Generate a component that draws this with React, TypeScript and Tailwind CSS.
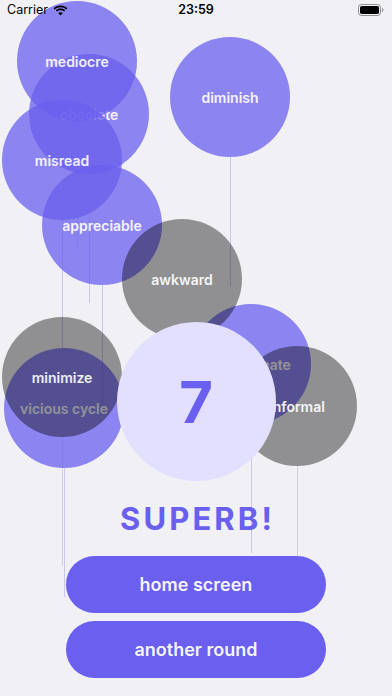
import React from "react"

type Balloon = {
  word: string
  x: number
  y: number
  gray?: boolean
}

// order matters: later ones sit on top
const balloons: Balloon[] = [
  { word: "obsolete", x: 89, y: 114 },
  { word: "mediocre", x: 77, y: 61 },
  { word: "misread", x: 62, y: 160 },
  { word: "appreciable", x: 102, y: 225 },
  { word: "diminish", x: 230, y: 97 },
  { word: "vicious cycle", x: 64, y: 408 },
  { word: "unfortunate", x: 251, y: 364 },
  { word: "awkward", x: 182, y: 279, gray: true },
  { word: "minimize", x: 62, y: 377, gray: true },
  { word: "informal", x: 297, y: 406, gray: true },
]

const R = 60
const STRING = 129

function Wifi() {
  return (
    <svg width="15" height="11" viewBox="0 0 15 11">
      <path d="M7.5 2.2c2.2 0 4.2.8 5.7 2.2l1.1-1.2C12.5 1.5 10.1.5 7.5.5S2.5 1.5.7 3.2l1.1 1.2c1.5-1.4 3.5-2.2 5.7-2.2z" fill="#000" />
      <path d="M7.5 5.2c1.4 0 2.6.5 3.6 1.3l1.1-1.2C11 4.1 9.3 3.5 7.5 3.5S4 4.1 2.8 5.3l1.1 1.2c1-.8 2.2-1.3 3.6-1.3z" fill="#000" />
      <path d="M7.5 10.5 9.8 8.1C9.2 7.6 8.4 7.2 7.5 7.2s-1.7.4-2.3.9z" fill="#000" />
    </svg>
  )
}

function Battery() {
  return (
    <svg width="26" height="12" viewBox="0 0 26 12">
      <rect x="0.5" y="0.5" width="22" height="11" rx="3" fill="none" stroke="#000" strokeOpacity="0.4" />
      <rect x="2" y="2" width="19" height="8" rx="1.8" fill="#000" />
      <path d="M24 4v4c.8-.3 1.4-1.1 1.4-2S24.8 4.3 24 4z" fill="#000" fillOpacity="0.4" />
    </svg>
  )
}

export default function App() {
  return (
    <div
      className="relative w-full h-[696px] overflow-hidden bg-[#f1f1f5]"
      style={{ fontFamily: "Inter, 'Noto Sans', sans-serif" }}
    >
      {/* balloon canvas */}
      <div className="absolute inset-0">
        {balloons.map((b) => (
          <div
            key={b.word + "-string"}
            className={`absolute w-px ${b.gray ? "bg-[#d2d1da]" : "bg-[#cbc7f6]"}`}
            style={{ left: b.x - 0.5, top: b.y + R, height: STRING }}
          />
        ))}
        {balloons.map((b) => (
          <div
            key={b.word}
            className={`absolute flex h-[120px] w-[120px] items-center justify-center rounded-full ${
              b.gray ? "bg-black/40" : "bg-[#6a5fee]/75"
            }`}
            style={{ left: b.x - R, top: b.y - R }}
          >
            <span className="whitespace-nowrap text-[14px] font-semibold text-white/90">{b.word}</span>
          </div>
        ))}
      </div>

      {/* status bar */}
      <div className="relative z-10 grid h-[20px] grid-cols-3 items-center px-[7px] text-black">
        <div className="flex items-center gap-[5px]">
          <span className="text-[12.5px]">Carrier</span>
          <Wifi />
        </div>
        <div className="text-center text-[12.5px] font-semibold">23:59</div>
        <div className="flex justify-end pr-[1px]">
          <Battery />
        </div>
      </div>

      {/* result */}
      <div className="relative z-10 flex flex-col items-center">
        <div className="mt-[302px] flex h-[159px] w-[159px] items-center justify-center rounded-full bg-[#e3e0ff]">
          <span className="text-[58px] font-bold leading-none text-[#6a5fee]">7</span>
        </div>
        <div className="mt-[22px] pl-[0.1em] text-[31px] font-bold leading-none tracking-[0.1em] text-[#6a5fee]">
          SUPERB!
        </div>
        <div className="mt-[22px] flex flex-col gap-[8px]">
          <button className="flex h-[57px] w-[260px] items-center justify-center rounded-full bg-[#6a5fee] text-[18px] font-semibold text-white/95">
            home screen
          </button>
          <button className="flex h-[57px] w-[260px] items-center justify-center rounded-full bg-[#6a5fee] text-[18px] font-semibold text-white/95">
            another round
          </button>
        </div>
      </div>
    </div>
  )
}
